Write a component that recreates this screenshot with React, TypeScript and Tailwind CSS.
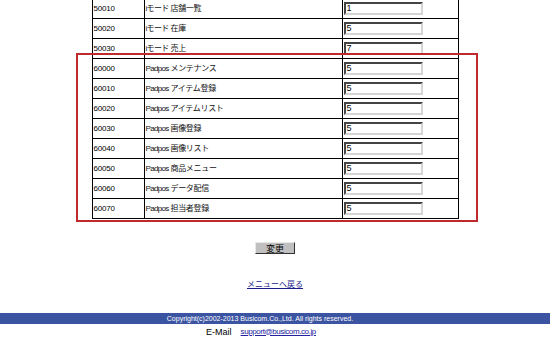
import React from "react";

const rows: [string, string, string][] = [
  ["50010", "iモード 店舗一覧", "1"],
  ["50020", "iモード 在庫", "5"],
  ["50030", "iモード 売上", "7"],
  ["60000", "Padpos メンテナンス", "5"],
  ["60010", "Padpos アイテム登録", "5"],
  ["60020", "Padpos アイテムリスト", "5"],
  ["60030", "Padpos 画像登録", "5"],
  ["60040", "Padpos 画像リスト", "5"],
  ["60050", "Padpos 商品メニュー", "5"],
  ["60060", "Padpos データ配信", "5"],
  ["60070", "Padpos 担当者登録", "5"],
];

export default function App() {
  return (
    <div className="relative w-[550px] h-[346px] overflow-hidden bg-white text-black">
      <div className="flex flex-col items-center mt-[-2px]">
        <table className="border-collapse table-fixed w-[366px] text-[8px] font-['Liberation_Sans','Noto_Sans_CJK_JP',sans-serif]">
          <colgroup>
            <col className="w-[52px]" />
            <col className="w-[198px]" />
            <col className="w-[116px]" />
          </colgroup>
          <tbody>
            {rows.map(([code, name, val]) => {
              const i = name.indexOf(" ");
              const latin = name.slice(0, i);
              const rest = name.slice(i + 1);
              return (
                <tr key={code} className="h-[20px]">
                  <td className="border border-black px-[1px] py-0 align-middle leading-[10px] tracking-[-0.2px]">{code}</td>
                  <td className="border border-black px-[1px] py-0 align-middle leading-[10px] text-[#111]">
                    <span className="tracking-[-0.7px]">{latin}</span>
                    <span className="inline-block w-[2px]" />
                    <span className="font-['Noto_Sans_CJK_JP',sans-serif] tracking-[-0.3px]">{rest}</span>
                  </td>
                  <td className="border border-black pl-[1px] py-0 align-middle">
                    <div className="w-[79px] h-[13px] border-t-2 border-l-2 border-b-2 border-r-2 border-t-[#444] border-l-[#444] border-b-[#d4d4d4] border-r-[#d4d4d4] bg-white flex items-center pl-[1px] text-[9px] leading-[9px] font-['Liberation_Sans',sans-serif]">
                      {val}
                    </div>
                  </td>
                </tr>
              );
            })}
          </tbody>
        </table>
        <div className="h-[23px]" />
        <button className="w-[40px] h-[12px] bg-[#c0c0c0] border border-t-[#e8e8e8] border-l-[#e8e8e8] border-b-[#303030] border-r-[#303030] flex items-center justify-center text-[9px] leading-[9px] font-['Noto_Sans_CJK_JP',sans-serif] text-black">
          変更
        </button>
        <div className="h-[24px]" />
        <a href="#" className="text-[8px] leading-[11px] underline text-[#1c1c8c] font-['Noto_Sans_CJK_JP',sans-serif]">
          メニューへ戻る
        </a>
        <div className="h-[24px]" />
        <div className="w-full h-[11px] bg-[#3b54a2] flex items-center justify-center pr-[30px] text-white text-[7px] leading-[8px] font-['Liberation_Sans',sans-serif]">
          Copyright(c)2002-2013 Busicom.Co.,Ltd. All rights reserved.
        </div>
        <div className="h-[15px] flex items-center text-[9px] leading-[10px] pr-[28px] font-['Liberation_Sans',sans-serif]">
          <span>E-Mail</span>
          <a href="#" className="ml-[9px] underline text-[#2323a0] text-[8px] tracking-[-0.4px]">
            support@busicom.co.jp
          </a>
        </div>
      </div>
      <div className="absolute left-[76px] top-[53px] w-[402px] h-[169px] border-2 border-[#bf2a2f]" />
    </div>
  );
}
